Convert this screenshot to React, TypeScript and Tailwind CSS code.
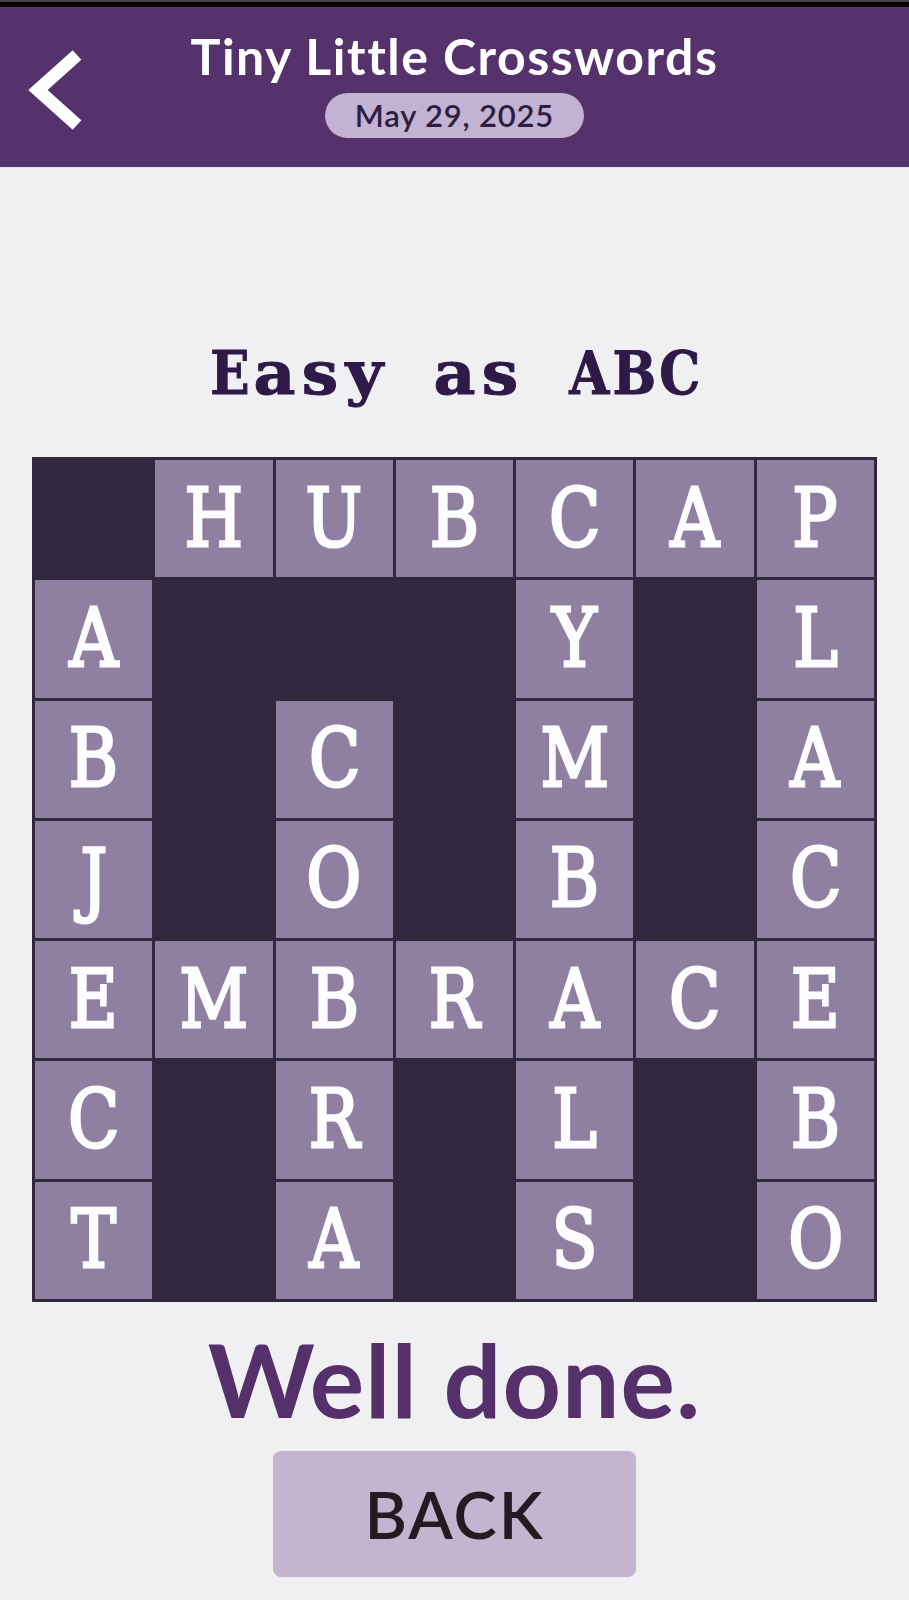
import React from 'react';

// '#' marks a black square
const GRID = [
  '#HUBCAP',
  'A###Y#L',
  'B#C#M#A',
  'J#O#B#C',
  'EMBRACE',
  'C#R#L#B',
  'T#A#S#O',
];

const sans = "font-['Lato','Noto_Sans',sans-serif]";
const slab = "font-['DejaVu_Serif','Liberation_Serif',serif]";

const BackChevron: React.FC = () => (
  <svg width="60" height="90" viewBox="0 0 60 90" className="block">
    <polyline
      points="53,9 14,44 53,79"
      fill="none"
      stroke="#ffffff"
      strokeWidth="13"
      strokeLinejoin="miter"
      strokeLinecap="butt"
    />
  </svg>
);

// typewriter-style title: each glyph sits in a fixed-width slot
const TypeTitle: React.FC<{ text: string }> = ({ text }) => (
  <h2
    className={`mt-[175px] flex text-[60px] leading-none font-bold text-[#2e1a47] [-webkit-text-stroke:1px_#2e1a47] ${slab}`}
  >
    {text.split('').map((ch, i) => (
      <span key={i} className="w-[45px] flex justify-center">
        <span className={`inline-block ${ch === ch.toLowerCase() ? 'scale-x-[1.08]' : 'scale-x-[0.86]'}`}>
          {ch === ' ' ? '\u00a0' : ch}
        </span>
      </span>
    ))}
  </h2>
);

const App: React.FC = () => {
  return (
    <div className={`min-h-[1600px] w-full bg-[#f0f0f2] ${sans}`}>
      {/* status strip */}
      <div className="h-[7px] bg-black border-t-2 border-[#444]" />

      {/* Header */}
      <header className="h-[161px] bg-[#55326b] grid grid-cols-[1fr_auto_1fr] border-b border-[#e4e0ea]">
        <div className="pl-[24px] pt-[39px]">
          <BackChevron />
        </div>
        <div className="flex flex-col items-center pt-[24px]">
          <h1 className="text-[50px] leading-none font-bold text-white tracking-[1.5px]">
            Tiny Little Crosswords
          </h1>
          <div className="mt-[12px] w-[259px] h-[45px] rounded-full bg-[#c3b2d3] flex items-center justify-center">
            <span className="text-[31px] leading-none font-semibold tracking-[0.8px] text-[#2d1d3f]">
              May 29, 2025
            </span>
          </div>
        </div>
        <div />
      </header>

      <main className="flex flex-col items-center">
        <TypeTitle text="Easy as ABC" />

        {/* Puzzle grid */}
        <div className="mt-[54px] w-[845px] h-[845px] bg-[#31273e] p-[3px] grid grid-cols-7 grid-rows-7 gap-[3px]">
          {GRID.flatMap((row, r) =>
            row.split('').map((ch, c) =>
              ch === '#' ? (
                <div key={`${r}-${c}`} />
              ) : (
                <div
                  key={`${r}-${c}`}
                  className={`bg-[#8f7fa0] flex items-center justify-center text-[#fdfcff] text-[80px] leading-none font-normal [-webkit-text-stroke:3px_#fdfcff] ${slab}`}
                >
                  <span className="inline-block scale-x-[0.84]">{ch}</span>
                </div>
              )
            )
          )}
        </div>

        <p className="mt-[26px] text-[102px] leading-none font-bold tracking-[1px] text-[#55306b]">Well done.</p>

        <button className="mt-[21px] w-[363px] h-[126px] rounded-lg bg-[#c4b4d0] flex items-center justify-center">
          <span className="text-[65px] leading-none font-semibold tracking-[2px] text-[#241b22]">BACK</span>
        </button>
      </main>
    </div>
  );
};

export default App;
